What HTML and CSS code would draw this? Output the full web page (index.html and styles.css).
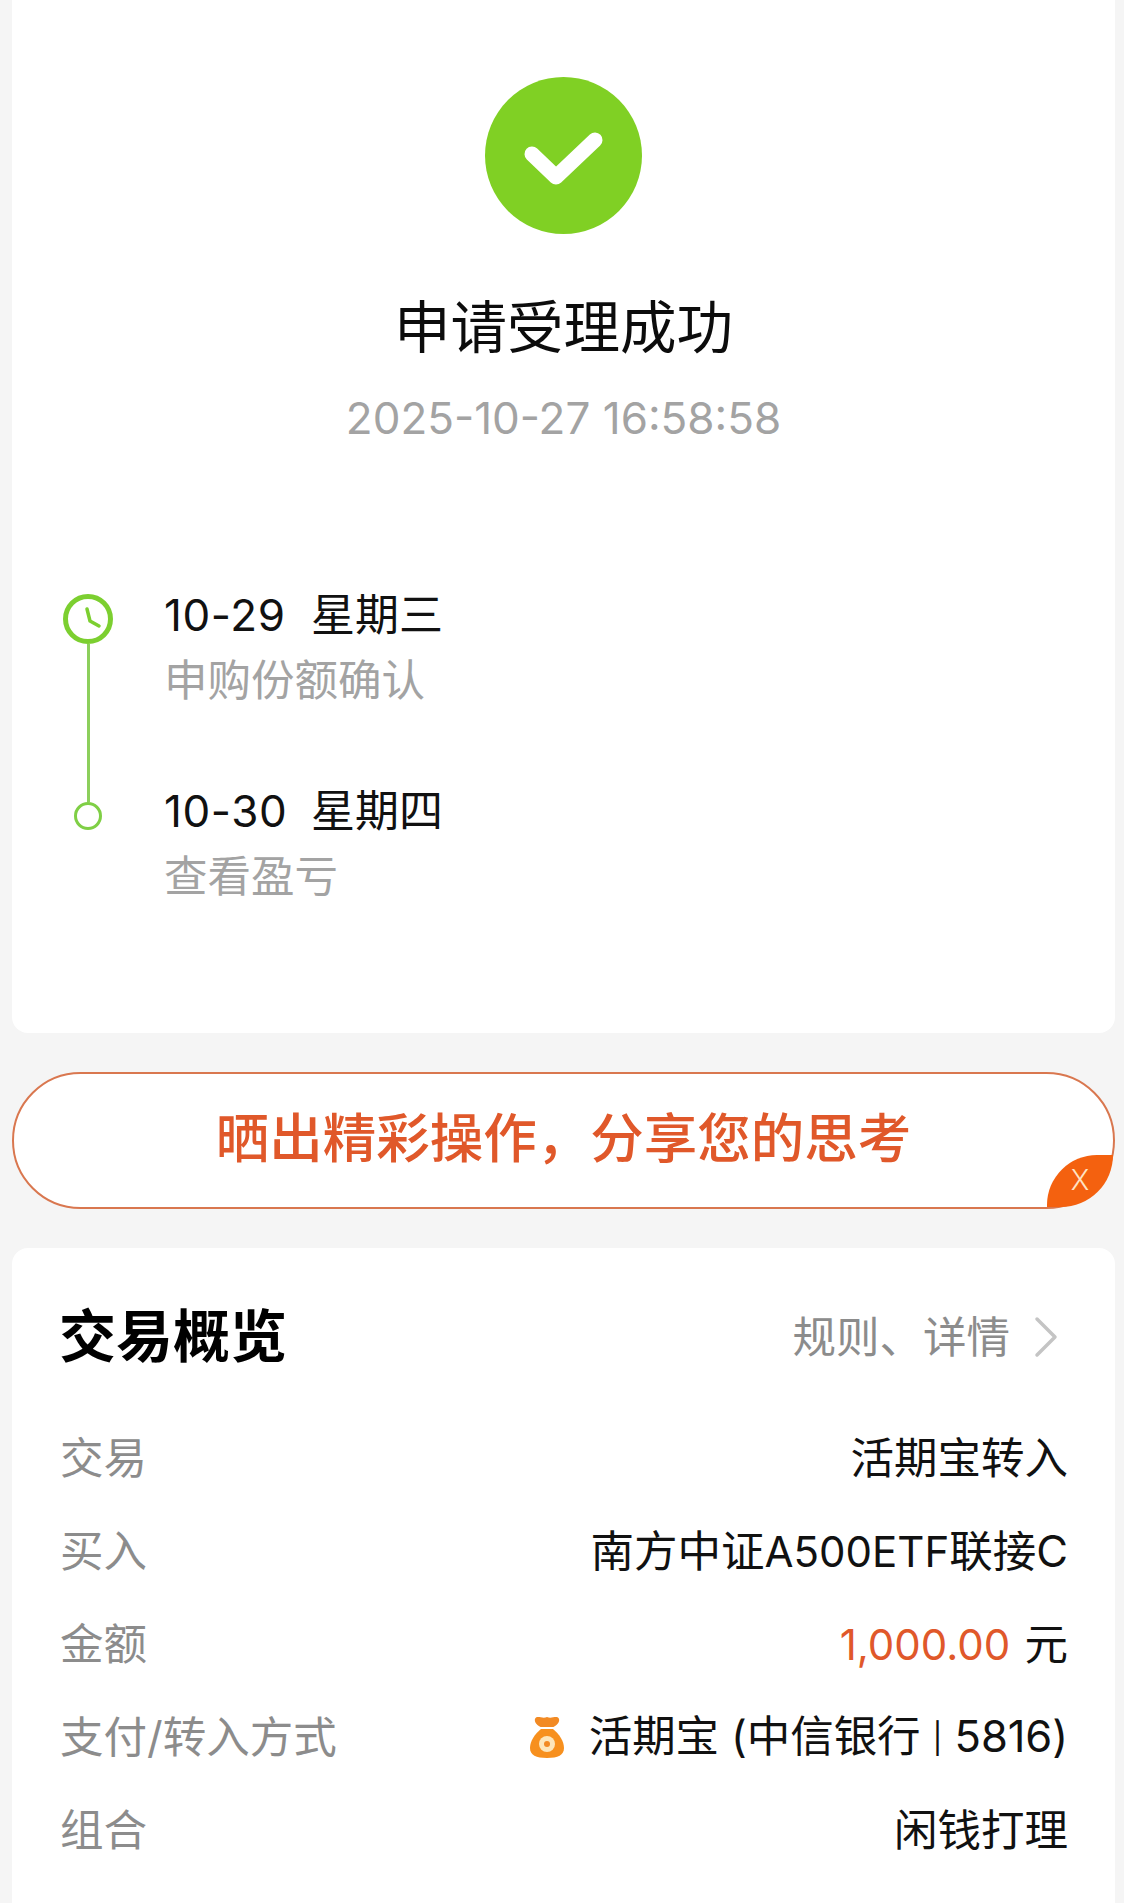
FILE: index.html
```html
<!DOCTYPE html>
<html lang="zh-CN">
<head>
<meta charset="utf-8">
<title>申请受理成功</title>
<link rel="stylesheet" href="styles.css">
</head>
<body>
<main class="page">
  <section class="card status">
    <svg class="success-icon" viewBox="0 0 157 157" aria-hidden="true">
      <circle cx="78.5" cy="78.5" r="78.5" fill="#80d024"/>
      <path d="M47 77 L71 100 L110 63" fill="none" stroke="#fff" stroke-width="15" stroke-linecap="round" stroke-linejoin="round"/>
    </svg>
    <h1 class="status-title">申请受理成功</h1>
    <p class="status-time">2025-10-27 16:58:58</p>
    <div class="timeline">
      <div class="rail">
        <svg class="rail-clock" viewBox="0 0 50 50" aria-hidden="true">
          <circle cx="25" cy="25" r="22.5" fill="#fff" stroke="#7ccf30" stroke-width="5"/>
          <path d="M24 15 L27 27 L36 32" fill="none" stroke="#7ccf30" stroke-width="3.5" stroke-linecap="round" stroke-linejoin="round"/>
        </svg>
        <span class="rail-line"></span>
        <span class="rail-dot"></span>
      </div>
      <div class="steps">
        <div class="step">
          <p class="step-date"><span class="step-day">10-29</span><span>星期三</span></p>
          <p class="step-note">申购份额确认</p>
        </div>
        <div class="step">
          <p class="step-date"><span class="step-day">10-30</span><span>星期四</span></p>
          <p class="step-note">查看盈亏</p>
        </div>
      </div>
    </div>
  </section>

  <section class="banner">
    <span class="banner-text">晒出精彩操作，分享您的思考</span>
    <span class="banner-close">X</span>
  </section>

  <section class="card overview">
    <header class="overview-head">
      <h2 class="overview-title">交易概览</h2>
      <div class="overview-link">
        <span>规则、详情</span>
        <svg class="chevron" viewBox="0 0 25 42" aria-hidden="true">
          <path d="M3 3 L21 21 L3 39" fill="none" stroke="#c4c4c4" stroke-width="3.5" stroke-linecap="round" stroke-linejoin="round"/>
        </svg>
      </div>
    </header>
    <dl class="rows">
      <div class="row"><dt>交易</dt><dd>活期宝转入</dd></div>
      <div class="row"><dt>买入</dt><dd>南方中证<span class="latin">A500ETF</span>联接C</dd></div>
      <div class="row"><dt>金额</dt><dd><span class="latin amount">1,000.00</span> 元</dd></div>
      <div class="row"><dt>支付/转入方式</dt><dd class="pay">
        <svg class="bag" viewBox="0 0 34 42" aria-hidden="true">
          <path d="M6 1.5 C9 0 13 3 17 1 C21 3 25 0 28 1.5 C31 4 28 9 23.5 11 L10.5 11 C6 9 3 4 6 1.5 Z" fill="#f28a24"/>
          <path d="M11 13 L23 13 C29 18 34 25 34 32 C34 39 28 42 17 42 C6 42 0 39 0 32 C0 25 5 18 11 13 Z" fill="#f7901e"/>
          <circle cx="17" cy="28" r="8" fill="#fde6bb"/>
          <circle cx="17" cy="28" r="3" fill="#f28a24"/>
        </svg>
        <span class="pay-text">活期宝 (中信银行 <span class="pipe">|</span> 5816)</span>
      </dd></div>
      <div class="row"><dt>组合</dt><dd>闲钱打理</dd></div>
    </dl>
  </section>
</main>
</body>
</html>
```

FILE: styles.css
```css
* { box-sizing: border-box; }
html, body { margin: 0; padding: 0; }
body {
  width: 1124px;
  height: 1903px;
  overflow: hidden;
  background: #f5f5f5;
  font-family: Inter, "Noto Sans CJK SC", sans-serif;
  color: #111;
}
h1, h2, p, dl, dd, dt { margin: 0; font-weight: 400; }

.page {
  display: flex;
  flex-direction: column;
  gap: 39px;
  padding: 0 9px 0 12px;
}
.card { background: #fff; }

.status {
  height: 1033px;
  padding-top: 77px;
  display: flex;
  flex-direction: column;
  align-items: center;
  border-radius: 0 0 16px 16px;
}
.success-icon { width: 157px; height: 157px; display: block; }
.status-title {
  margin-top: 64px;
  font-size: 56.5px;
  line-height: 60px;
  color: #0c0c0c;
}
.status-time {
  margin-top: 35px;
  font-size: 44px;
  line-height: 50px;
  color: #a3a3a3;
}

.timeline {
  align-self: stretch;
  margin-top: 142px;
  padding-left: 51px;
  display: flex;
  gap: 51px;
}
.rail {
  width: 50px;
  padding-top: 9px;
  display: flex;
  flex-direction: column;
  align-items: center;
}
.rail-clock { width: 50px; height: 50px; display: block; }
.rail-line { width: 3px; height: 158px; background: #8ccf5c; }
.rail-dot {
  width: 28px;
  height: 28px;
  border: 3px solid #7fcf45;
  border-radius: 50%;
}
.steps { display: flex; flex-direction: column; gap: 75px; padding-top: 2px; }
.step { display: flex; flex-direction: column; gap: 9px; }
.step-date {
  display: flex;
  font-size: 44px;
  line-height: 56px;
  color: #111;
}
.step-day { width: 147px; letter-spacing: 0.6px; }
.step-note {
  font-size: 43.5px;
  line-height: 56px;
  color: #a3a3a3;
}

.banner {
  position: relative;
  height: 137px;
  display: flex;
  align-items: center;
  justify-content: center;
  padding-bottom: 4px;
  background: #fff;
  border: 2px solid #d9774f;
  border-radius: 69px;
}
.banner-text {
  font-size: 53.5px;
  font-weight: 500;
  color: #e0582a;
  line-height: 60px;
}
.banner-close {
  position: absolute;
  right: 0;
  bottom: 0;
  width: 66px;
  height: 52px;
  display: flex;
  align-items: center;
  justify-content: center;
  padding-bottom: 2px;
  background: #f4610f;
  border-radius: 50px 0 52px 0;
  color: #ffe3c4;
  font-size: 28px;
  font-weight: 300;
}

.overview {
  flex: 1;
  padding: 60px 47px 43px 48px;
  border-radius: 16px 16px 0 0;
}
.overview-head {
  display: flex;
  justify-content: space-between;
  align-items: center;
  height: 58px;
}
.overview-title {
  margin-left: -1px;
  font-size: 57px;
  font-weight: 700;
  line-height: 58px;
  color: #000;
}
.overview-link {
  display: flex;
  align-items: center;
  gap: 24px;
  padding-right: 9px;
  font-size: 43.5px;
  line-height: 54px;
  color: #8c8c8c;
}
.chevron { width: 25px; height: 42px; display: block; }

.rows {
  margin-top: 62px;
  display: flex;
  flex-direction: column;
  gap: 33px;
}
.row {
  display: flex;
  justify-content: space-between;
  align-items: center;
  height: 60px;
  font-size: 43.5px;
  line-height: 60px;
}
.row dt { color: #8c8c8c; }
.row dd { color: #111; }
.latin { font-size: 42px; }
.amount { color: #e0582a; margin-right: 2px; }
.pipe { font-size: 30px; vertical-align: 3px; }
.pay { display: flex; align-items: center; gap: 25px; }
.pay-text { letter-spacing: -0.1px; }
.bag { width: 34px; height: 42px; display: block; }
```
